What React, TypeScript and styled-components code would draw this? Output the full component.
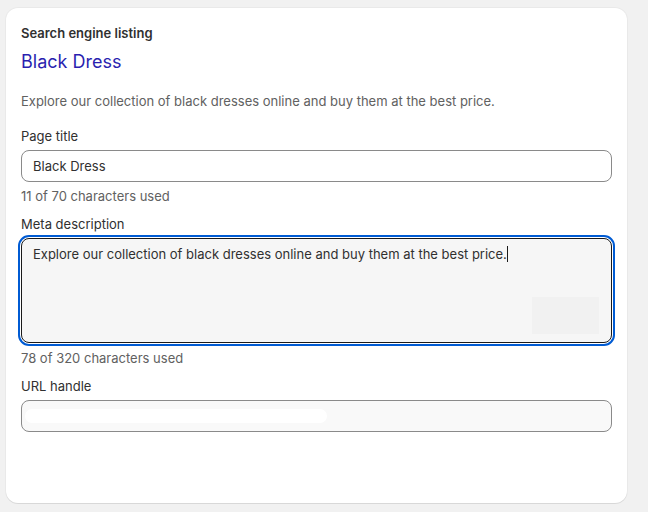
import styled, { createGlobalStyle } from "styled-components"

const GlobalStyle = createGlobalStyle`
  html, body {
    margin: 0;
    background: #f1f1f1;
    font-family: Inter, "Noto Sans", "Liberation Sans", sans-serif;
    -webkit-font-smoothing: antialiased;
  }
`

const Page = styled.div`
  padding: 8px 21px 0 6px;
  height: 512px;
  box-sizing: border-box;
`

const Card = styled.section`
  background: #fff;
  border-radius: 12px;
  box-shadow: 0 1px 0 rgba(0, 0, 0, 0.07), 0 0 0 1px rgba(0, 0, 0, 0.03);
  height: 495px;
  box-sizing: border-box;
  padding: 15px 15px;
  display: flex;
  flex-direction: column;
`

const Heading = styled.h2`
  margin: 0;
  font-size: 13px;
  line-height: 20px;
  font-weight: 600;
  color: #303030;
`

const PreviewTitle = styled.div`
  margin-top: 7px;
  font-size: 18px;
  line-height: 24px;
  color: #2a1fb0;
`

const PreviewDesc = styled.p`
  margin: 17px 0 0;
  font-size: 13px;
  line-height: 20px;
  color: #616161;
`

const Label = styled.label<{ $gap: number }>`
  display: block;
  margin-top: ${p => p.$gap}px;
  font-size: 13px;
  line-height: 20px;
  color: #303030;
`

const Help = styled.div<{ $gap?: number }>`
  margin-top: ${p => p.$gap ?? 4}px;
  font-size: 13px;
  line-height: 20px;
  color: #616161;
`

const TextInput = styled.div<{ $muted?: boolean }>`
  margin-top: 4px;
  height: 32px;
  box-sizing: border-box;
  border: 1px solid #8a8a8a;
  border-radius: 8px;
  background: ${p => (p.$muted ? "#f9f9f9" : "#fff")};
  padding: 0 11px;
  display: flex;
  align-items: center;
  font-size: 13px;
  color: #303030;
`

const Skeleton = styled.div`
  width: 302px;
  height: 14px;
  border-radius: 7px;
  background: #fff;
  margin-left: -8px;
`

const TextArea = styled.div`
  position: relative;
  margin-top: 4px;
  height: 105px;
  box-sizing: border-box;
  border: 1px solid #1a1a1a;
  border-radius: 8px;
  background: #f6f6f6;
  outline: 2px solid #005bd3;
  outline-offset: 1px;
  padding: 5px 11px;
  font-size: 13px;
  line-height: 20px;
  color: #303030;
`

const Caret = styled.span`
  display: inline-block;
  width: 1px;
  height: 16px;
  background: #1a1a1a;
  vertical-align: -3px;
`

const Resizer = styled.div`
  position: absolute;
  right: 12px;
  bottom: 8px;
  width: 67px;
  height: 37px;
  background: #f1f1f1;
`

const description =
  "Explore our collection of black dresses online and buy them at the best price."

export default function App() {
  return (
    <>
      <GlobalStyle />
      <Page>
        <Card>
          <Heading>Search engine listing</Heading>
          <PreviewTitle>Black Dress</PreviewTitle>
          <PreviewDesc>{description}</PreviewDesc>

          <Label $gap={15}>Page title</Label>
          <TextInput>Black Dress</TextInput>
          <Help>11 of 70 characters used</Help>

          <Label $gap={8}>Meta description</Label>
          <TextArea>
            {description}
            <Caret />
            <Resizer />
          </TextArea>
          <Help $gap={5}>78 of 320 characters used</Help>

          <Label $gap={8}>URL handle</Label>
          <TextInput $muted>
            <Skeleton />
          </TextInput>
        </Card>
      </Page>
    </>
  )
}
